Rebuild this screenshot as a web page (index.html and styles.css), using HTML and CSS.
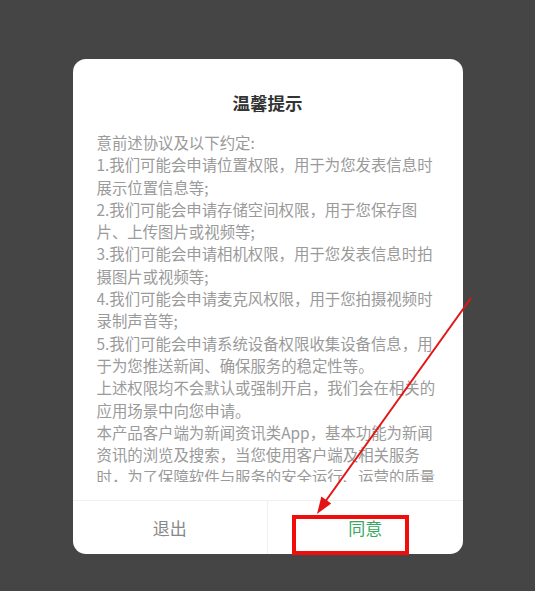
FILE: index.html
```html
<!DOCTYPE html>
<html lang="zh-CN">
<head>
    <meta charset="UTF-8">
    <meta name="viewport" content="width=device-width, initial-scale=1.0">
    <title>温馨提示</title>
    <link rel="stylesheet" href="styles.css">
</head>
<body>
    <div class="dialog">
        <div class="title">温馨提示</div>
        <div class="content">
            <p>意前述协议及以下约定:</p>
            <p>1.我们可能会申请位置权限，用于为您发表信息时展示位置信息等;</p>
            <p>2.我们可能会申请存储空间权限，用于您保存图片、上传图片或视频等;</p>
            <p>3.我们可能会申请相机权限，用于您发表信息时拍摄图片或视频等;</p>
            <p>4.我们可能会申请麦克风权限，用于您拍摄视频时录制声音等;</p>
            <p>5.我们可能会申请系统设备权限收集设备信息，用于为您推送新闻、确保服务的稳定性等。</p>
            <p>上述权限均不会默认或强制开启，我们会在相关的应用场景中向您申请。</p>
            <p>本产品客户端为新闻资讯类App，基本功能为新闻资讯的浏览及搜索，当您使用客户端及相关服务时，为了保障软件与服务的安全运行、运营的质量及效率，我们会收集您的硬件型号、操作系统版本号。</p>
        </div>
        <div class="footer">
            <button class="btn btn-exit">退出</button>
            <button class="btn btn-agree">同意</button>
        </div>
    </div>

    <!-- annotation drawn over the screenshot -->
    <svg class="marks" width="535" height="591" viewBox="0 0 535 591">
        <line x1="471" y1="298" x2="325" y2="502" stroke="#e31414" stroke-width="2"/>
        <polygon points="317,514 321.4,496.5 331.2,503.5" fill="#e31414"/>
        <rect x="294" y="517" width="113" height="36" fill="none" stroke="#f20d0d" stroke-width="4"/>
    </svg>
</body>
</html>
```

FILE: styles.css
```css
body {
    margin: 0;
    height: 591px;
    background: #454545;
    font-family: "Noto Sans CJK SC", "Noto Sans", sans-serif;
    display: flex;
    justify-content: center;
    align-items: flex-start;
    padding-top: 59px;
    box-sizing: border-box;
    overflow: hidden;
}
.dialog {
    width: 390px;
    background: #fff;
    border-radius: 13px;
    display: flex;
    flex-direction: column;
    overflow: hidden;
}
.title {
    padding-top: 32px;
    height: 24px;
    line-height: 24px;
    font-size: 17.5px;
    font-weight: bold;
    color: #333;
    text-align: center;
}
.content {
    margin: 16px 23px 0 24px;
    height: 351px;
    overflow: hidden;
    font-size: 15.4px;
    line-height: 22.3px;
    color: #9a9a9a;
}
.content p {
    margin: 0;
}
.footer {
    margin-top: 18px;
    border-top: 1px solid #f0f0f0;
    height: 53px;
    display: flex;
}
.btn {
    flex: 1;
    border: none;
    background: none;
    font-family: inherit;
    font-size: 17px;
    padding: 0;
}
.btn-exit {
    color: #888;
    border-right: 1px solid #f0f0f0;
}
.btn-agree {
    color: #37a862;
}
.marks {
    position: absolute;
    left: 0;
    top: 0;
    pointer-events: none;
}
```
